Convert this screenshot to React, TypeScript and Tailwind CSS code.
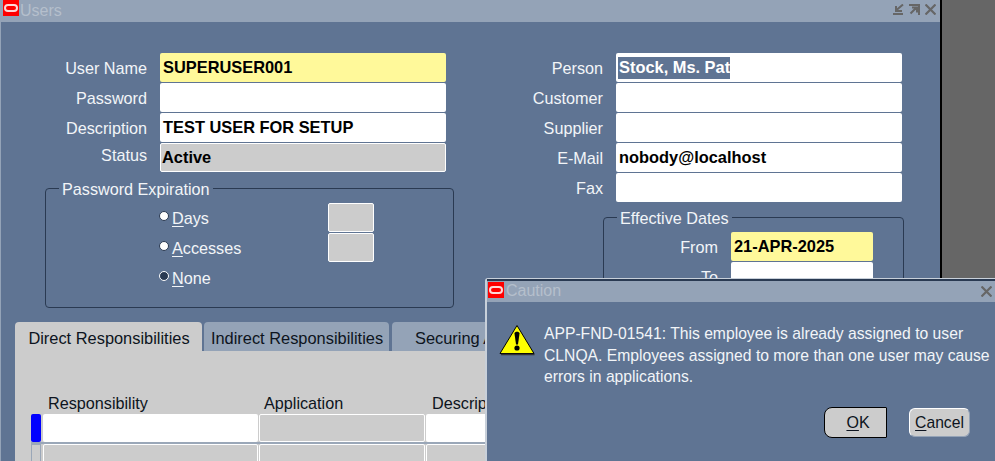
import React from "react";

const OracleIcon = () => (
  <span className="flex h-[16px] w-[16px] shrink-0 items-start justify-center bg-[#ff0000]">
    <span className="mt-[4px] block h-[8px] w-[14px] rounded-full border-2 border-[#ffd8d8]" />
  </span>
);

const Field = ({ value, tone = "white", selected, className = "" }: { value?: string; tone?: "white" | "yellow" | "grey"; selected?: string; className?: string }) => {
  const bg = tone === "yellow" ? "bg-[#fff99a]" : tone === "grey" ? "bg-[#cccccc]" : "bg-white";
  return (
    <div className={`flex h-[29px] items-center rounded-[2px] ${bg} ${tone === "grey" ? "border border-white pl-[1px]" : selected ? "pl-[2px]" : "pl-[3px]"} text-[16.4px] font-bold text-black ${className}`}>
      {selected ? <span className="flex h-[22px] items-center bg-[#5f7493] pl-[1px] text-white">{selected}</span> : null}
      {value}
    </div>
  );
};

const Row = ({ label, labelW, children, nudge }: { label: string; labelW: string; children: React.ReactNode; nudge?: boolean }) => (
  <div className="flex h-[30px] items-start gap-[13px]">
    <span className={`${labelW} ${nudge ? "pt-[2px]" : "pt-[5px]"} text-right text-[16.2px] leading-[20px] text-[#f2f5f8]`}>{label}</span>
    {children}
  </div>
);

const Radio = ({ label, on }: { label: string; on?: boolean }) => (
  <div className="flex h-[30px] items-center gap-[3px] text-[16.2px] leading-[20px] text-[#f2f5f8]">
    <span className={`-mt-[4px] h-[10px] w-[10px] rounded-full border ${on ? "border-white bg-[#2a3a52]" : "border-[#2a3a52] bg-white"}`} />
    <span>
      <span className="underline underline-offset-2">{label[0]}</span>
      {label.slice(1)}
    </span>
  </div>
);

const Cell = ({ w, white }: { w: string; white?: boolean }) => (
  <div className={`${w} h-[28px] shrink-0 rounded-[2px] ${white ? "bg-white" : "border border-white bg-[#cccccc]"}`} />
);

export default function App() {
  return (
    <div className="relative h-[461px] w-[995px] overflow-hidden bg-[#666666] font-['Liberation_Sans',Arial,sans-serif]">
      {/* Users window */}
      <div className="absolute left-0 top-0 h-[461px] w-[942px] border-r-2 border-r-black border-l border-l-[#94a3b7] bg-[#5f7493]">
        <div className="flex h-[22px] items-center bg-[#94a3b7] pr-[4px]">
          <div className="mb-[6px] pl-[2px]">
            <OracleIcon />
          </div>
          <span className="ml-[1px] text-[16px] leading-[20px] text-[#b5bfcc]">Users</span>
          <div className="ml-auto flex items-center gap-[5px] pb-[3px] text-[#666666]">
            <svg width="11" height="11" viewBox="0 0 11 11" fill="none" stroke="currentColor" strokeWidth="2">
              <path d="M10 0.5 3.5 6M3 2v5h6M0 10h10" />
            </svg>
            <svg width="11" height="11" viewBox="0 0 11 11" fill="none" stroke="currentColor" strokeWidth="2">
              <path d="M1.5 9.5 7 4M3 3.5h5v5M0 1h10v10" />
            </svg>
            <svg width="11" height="11" viewBox="0 0 11 11" fill="none" stroke="currentColor" strokeWidth="2.2">
              <path d="M0.5 0.5l10 10M10.5 0.5l-10 10" />
            </svg>
          </div>
        </div>

        <div className="flex pt-[31px]">
          <div className="w-[469px] shrink-0">
            <Row label="User Name" labelW="w-[146px]"><Field value="SUPERUSER001" tone="yellow" className="w-[286px]" /></Row>
            <Row label="Password" labelW="w-[146px]"><Field className="w-[286px]" /></Row>
            <Row label="Description" labelW="w-[146px]"><Field value="TEST USER FOR SETUP" className="w-[286px]" /></Row>
            <Row label="Status" labelW="w-[146px]" nudge><Field value="Active" tone="grey" className="w-[286px]" /></Row>
            <fieldset className="ml-[44px] mt-[5px] h-[130px] w-[409px] rounded-[4px] border border-[#2a3a52] p-0">
              <legend className="relative top-[1px] ml-[13px] px-[3px] text-[16.2px] leading-[20px] text-[#f2f5f8]">Password Expiration</legend>
              <div className="flex pl-[113px] pt-[5px]">
                <div className="w-[169px]">
                  <Radio label="Days" />
                  <Radio label="Accesses" />
                  <Radio label="None" on />
                </div>
                <div className="flex flex-col gap-[1px]">
                  <div className="h-[29px] w-[46px] rounded-[2px] border border-white bg-[#cccccc]" />
                  <div className="h-[29px] w-[46px] rounded-[2px] border border-white bg-[#cccccc]" />
                </div>
              </div>
            </fieldset>
          </div>

          <div className="w-[433px] shrink-0">
            <Row label="Person" labelW="w-[133px]"><Field selected="Stock, Ms. Pat" className="w-[286px]" /></Row>
            <Row label="Customer" labelW="w-[133px]"><Field className="w-[286px]" /></Row>
            <Row label="Supplier" labelW="w-[133px]"><Field className="w-[286px]" /></Row>
            <Row label="E-Mail" labelW="w-[133px]"><Field value="nobody@localhost" className="w-[286px]" /></Row>
            <Row label="Fax" labelW="w-[133px]"><Field className="w-[286px]" /></Row>
            <fieldset className="ml-[133px] mt-[4px] h-[100px] w-[301px] rounded-[4px] border border-[#2a3a52] p-0">
              <legend className="relative top-[1px] ml-[13px] px-[3px] text-[16.2px] leading-[20px] text-[#f2f5f8]">Effective Dates</legend>
              <div className="flex items-start gap-[13px] pt-[5px]">
                <span className="w-[114px] pt-[5px] text-right text-[16.2px] leading-[20px] text-[#f2f5f8]">From</span>
                <Field value="21-APR-2025" tone="yellow" className="w-[142px]" />
              </div>
              <div className="flex items-start gap-[13px] pt-[1px]">
                <span className="w-[114px] pt-[5px] text-right text-[16.2px] leading-[20px] text-[#f2f5f8]">To</span>
                <Field className="w-[142px]" />
              </div>
            </fieldset>
          </div>
        </div>

        {/* Tabs */}
        <div className="absolute left-[14px] top-[322px] w-[912px]">
          <div className="flex h-[29px] items-stretch gap-[2px] text-[16.4px] leading-[20px] text-[#0d1420]">
            <div className="flex w-[187px] items-center justify-center rounded-t-[4px] bg-[#cccccc] pl-[1px] pt-[2px]">Direct Responsibilities</div>
            <div className="flex w-[185px] items-center justify-center rounded-t-[4px] bg-[#94a3b7] pl-[1px] pt-[2px]">Indirect Responsibilities</div>
            <div className="ml-[1px] flex w-[200px] items-center rounded-t-[4px] bg-[#94a3b7] pl-[23px] pt-[2px]">Securing Attributes</div>
          </div>
          <div className="h-[110px] bg-[#cccccc] pl-[16px] pt-[42px]">
            <div className="flex h-[21px] text-[16.2px] leading-[20px] text-[#0d1420]">
              <span className="w-[233px] pl-[17px]">Responsibility</span>
              <span className="w-[168px]">Application</span>
              <span>Description</span>
            </div>
            <div className="flex h-[30px] gap-[1px] border-b-2 border-[#9aa7b8]">
              <div className="mr-[1px] h-[28px] w-[10px] rounded-[2px] bg-[#0000ff]" />
              <div className="h-[28px] w-[215px] rounded-[2px] bg-white" />
              <Cell w="w-[166px]" />
              <Cell w="w-[200px]" white />
            </div>
            <div className="flex h-[30px] gap-[1px]">
              <div className="mr-[1px] h-[30px] w-[10px] border border-[#9aa7b8]" />
              <div className="h-[30px] w-[215px] rounded-[2px] border border-white bg-[#cccccc]" />
              <div className="h-[30px] w-[166px] rounded-[2px] border border-white bg-[#cccccc]" />
              <div className="h-[30px] w-[200px] rounded-[2px] border border-white bg-[#cccccc]" />
            </div>
          </div>
        </div>
      </div>

      {/* Caution dialog */}
      <div className="absolute left-[485px] top-[278px] h-[183px] w-[510px] rounded-tl-[3px] border-l-2 border-t border-l-[#c8d0da] border-t-[#c8d0da] bg-[#5f7493]">
        <div className="h-[2px] bg-[#2a3a52]" />
        <div className="flex h-[21px] items-center bg-[#94a3b7] pr-[3px]">
          <div className="mb-[3px] pl-[1px]"><OracleIcon /></div>
          <span className="ml-[2px] pb-[2px] text-[16px] leading-[20px] text-[#b5bfcc]">Caution</span>
          <svg className="ml-auto text-[#666666]" width="11" height="11" viewBox="0 0 11 11" fill="none" stroke="currentColor" strokeWidth="2.2">
            <path d="M0.5 0.5l10 10M10.5 0.5l-10 10" />
          </svg>
        </div>
        <div className="flex pt-[21px]">
          <svg className="ml-[12px] mt-[1px] shrink-0" width="36" height="32" viewBox="0 0 36 32">
            <path d="M18 1.5 35 29.5H1Z" fill="#ffff00" stroke="#000" strokeWidth="1" strokeLinejoin="round" />
            <path d="M2 30.5H35.5" stroke="#333" strokeWidth="1.5" />
            <path d="M15.5 9.5c0-2.5 5-2.5 5 0L19 20.5h-2Z" fill="#000" />
            <circle cx="18" cy="24" r="2.6" fill="#000" />
          </svg>
          <p className="ml-[9px] w-[446px] text-[15.7px] leading-[21.5px] text-[#f2f5f8]">
            APP-FND-01541: This employee is already assigned to user CLNQA. Employees assigned to more than one user may cause errors in applications.
          </p>
        </div>
        <div className="mt-[19px] flex items-center pl-[337px]">
          <button className="flex h-[31px] w-[63px] items-center justify-center rounded-[8px] rounded-tr-[1px] rounded-br-[1px] border border-black bg-[#cccccc] pl-[5px] pt-[2px] text-[16px] text-[#0d1420]">
            <span><span className="underline underline-offset-2">O</span>K</span>
          </button>
          <button className="ml-[22px] flex h-[29px] w-[61px] items-center justify-center rounded-[6px] border border-l-white border-t-white border-r-[#94a3b7] border-b-[#94a3b7] bg-[#cccccc] pt-[2px] text-[15.7px] text-[#0d1420]">
            <span><span className="underline underline-offset-2">C</span>ancel</span>
          </button>
        </div>
      </div>
    </div>
  );
}
